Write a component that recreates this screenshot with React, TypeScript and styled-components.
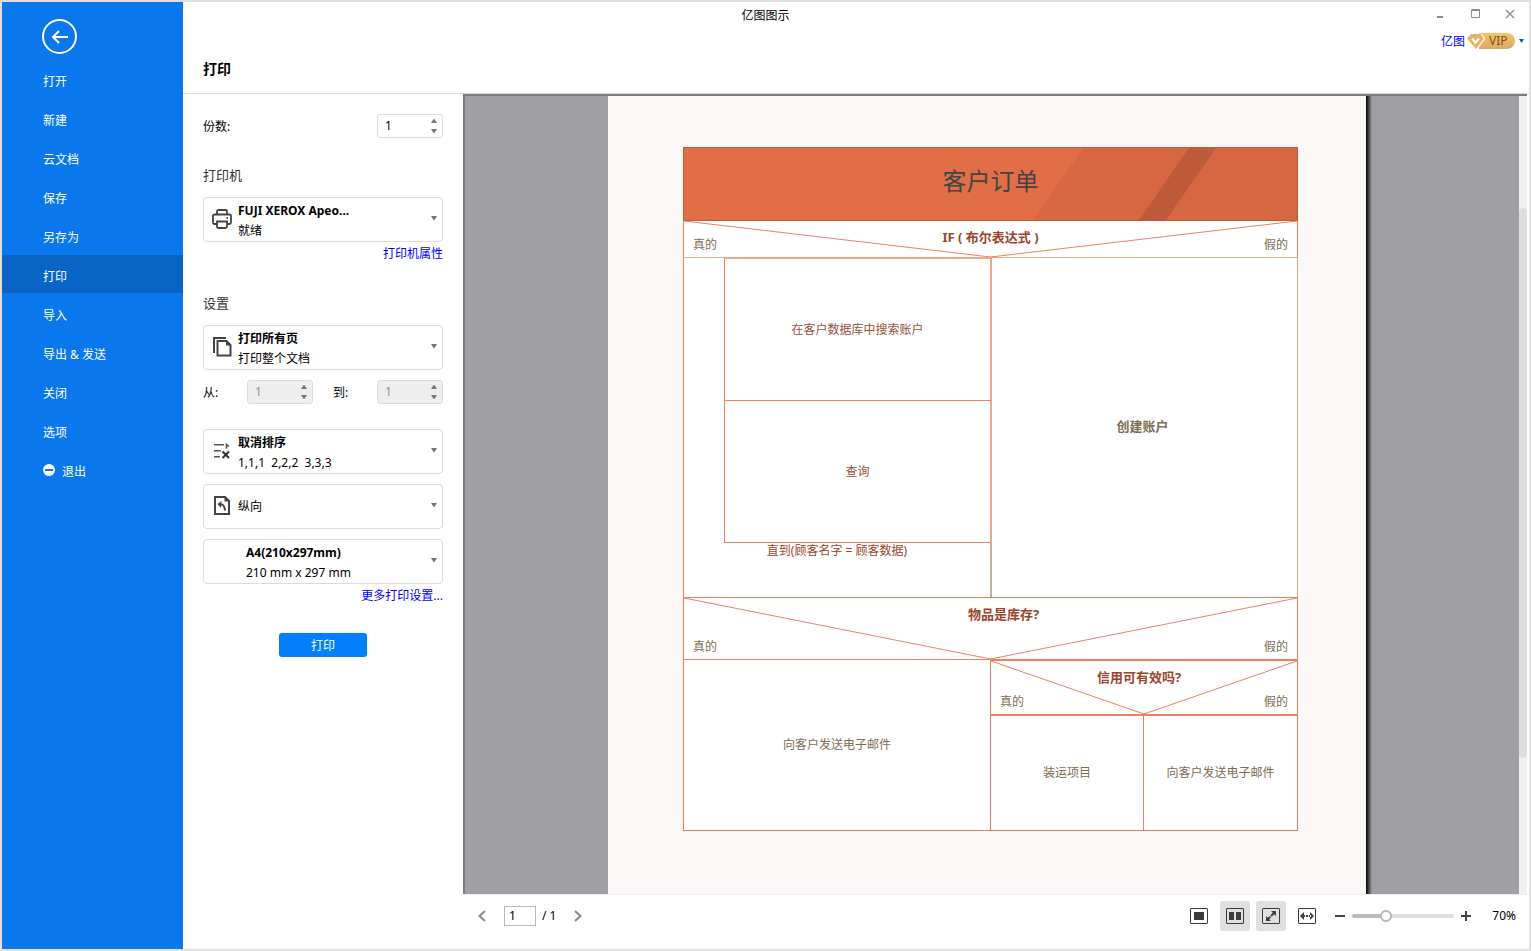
import React, { useState } from "react";
import styled, { createGlobalStyle, css } from "styled-components";

const GlobalStyle = createGlobalStyle`
  *, *::before, *::after { box-sizing: border-box; }
  body { margin: 0; }
  body, button, input, select {
    font-family: "Noto Sans", "Noto Sans CJK SC", sans-serif;
    font-size: 12px;
    line-height: 20px;
    color: #000;
  }
  button { border: 0; padding: 0; background: none; cursor: pointer; }
  a { color: #0000ff; text-decoration: none; }
`;

const LINE = "#ee7f5e";
const SOFT_LINE = "#f2a489";
const TAN_LINE = "#c8ae94";

/* ---------- window frame ---------- */

const Window = styled.div`
  display: grid;
  grid-template-columns: 181px minmax(0, 1fr);
  grid-template-rows: 26px 66px minmax(0, 1fr);
  height: 100vh;
  border: 2px solid #e0e0e0;
  background: #fff;
`;

const WindowTitle = styled.div`
  grid-column: 1 / -1;
  grid-row: 1;
  z-index: 1;
  padding-top: 4px;
  text-align: center;
  pointer-events: none;
`;

const WindowControls = styled.div`
  grid-column: 2;
  grid-row: 1;
  justify-self: end;
  z-index: 2;
  display: flex;
  gap: 11px;
  padding-right: 7px;
`;

const WindowButton = styled.button`
  display: grid;
  place-items: center;
  width: 24px;
  height: 24px;
`;

/* ---------- sidebar ---------- */

const Sidebar = styled.nav`
  grid-column: 1;
  grid-row: 1 / -1;
  padding-top: 17px;
  background: #0a77ed;
`;

const BackButton = styled.button`
  display: block;
  width: 35px;
  height: 35px;
  margin: 0 0 6px 40px;
`;

const Menu = styled.ul`
  display: grid;
  gap: 1px;
  margin: 0;
  padding: 0;
  list-style: none;
`;

const MenuLink = styled.a<{ $active?: boolean }>`
  display: flex;
  align-items: center;
  gap: 7px;
  height: 38px;
  padding: 6px 0 0 41px;
  color: #fff;
  background: ${(p) => (p.$active ? "#0865c6" : "transparent")};
`;

const ExitIcon = styled.svg`
  margin-bottom: 4px;
`;

/* ---------- page header ---------- */

const PageHeader = styled.header`
  grid-column: 2;
  grid-row: 2;
  display: flex;
  justify-content: space-between;
  align-items: flex-start;
  padding: 3px 5px 0 20px;
  border-bottom: 1px solid #dcdcdc;
`;

const PageTitle = styled.h1`
  margin: 28px 0 0;
  font-size: 14px;
  line-height: 20px;
`;

const Account = styled.div`
  display: flex;
  align-items: center;
  gap: 2px;
  height: 20px;
`;

const AccountLink = styled.a`
  padding-top: 2px;
`;

const VipBadge = styled.span`
  display: flex;
  align-items: center;
  width: 48px;
  height: 16px;
  border-radius: 0 8px 8px 0;
  background: linear-gradient(#f3c765, #dba762) 12px 0 / 36px 16px no-repeat;
  color: #7c5220;
  line-height: 16px;
`;

const AccountMenu = styled.button`
  display: grid;
  width: 5px;
  margin-left: 2px;
`;

/* ---------- settings panel ---------- */

const Content = styled.div`
  grid-column: 2;
  grid-row: 3;
  display: grid;
  grid-template-columns: 280px minmax(0, 1fr);
`;

const Settings = styled.form`
  display: flex;
  flex-direction: column;
  padding: 20px;
`;

const FieldRow = styled.div`
  display: flex;
  align-items: center;
  justify-content: space-between;
  height: 24px;
`;

const RangeRow = styled.div`
  display: grid;
  grid-template-columns: 44px 86px 44px 66px;
  align-items: center;
  height: 24px;
  margin: 10px 0 25px;
`;

const FieldLabel = styled.label`
  padding-top: 2px;
`;

const SectionTitle = styled.h2`
  margin: 27px 0 12px;
  font-size: 13px;
  font-weight: 400;
  line-height: 20px;
  color: #333;
`;

const StepperBox = styled.div<{ $disabled?: boolean }>`
  display: flex;
  width: 66px;
  height: 24px;
  border: 1px solid ${(p) => (p.$disabled ? "#dedede" : "#dcdcdc")};
  border-radius: 3px;
  background: ${(p) => (p.$disabled ? "#eeeeee" : "#fff")};
`;

const StepperInput = styled.input`
  width: 48px;
  padding: 0 0 0 7px;
  border: 0;
  background: transparent;
  appearance: textfield;
  outline: 0;
  &::-webkit-inner-spin-button { appearance: none; margin: 0; }
  &:disabled { color: #9a938c; }
`;

const StepperButtons = styled.div`
  display: grid;
  grid-template-rows: 10px 10px;
  align-content: center;
  width: 16px;
`;

const StepButton = styled.button`
  display: grid;
  place-items: center;
`;

const Card = styled.div`
  display: grid;
  grid-template-columns: 34px minmax(0, 1fr) 18px;
  align-items: center;
  height: 45px;
  flex: none;
  border: 1px solid #dcdcdc;
  border-radius: 4px;
  & + & { margin-top: 10px; }
`;

const CardIcon = styled.span`
  grid-area: 1 / 1;
  display: grid;
  padding-left: 8px;
  padding-bottom: 2px;
`;

const CardSelect = styled.select<{ $single?: boolean; $indent?: boolean }>`
  grid-area: 1 / 1 / 2 / 4;
  width: 100%;
  height: 43px;
  margin: 0;
  padding: ${(p) => (p.$single ? "0" : "0 0 18px")};
  padding-left: ${(p) => (p.$indent ? "42px" : "34px")};
  border: 0;
  border-radius: 4px;
  background: transparent;
  appearance: none;
  font-weight: ${(p) => (p.$single ? 400 : 700)};
`;

const CardDetail = styled.span<{ $indent?: boolean }>`
  grid-area: 1 / 2;
  align-self: end;
  padding-left: ${(p) => (p.$indent ? "8px" : "0")};
  white-space: pre;
  pointer-events: none;
`;

const CardCaret = styled.span`
  grid-area: 1 / 3;
  display: grid;
  padding-left: 7px;
  padding-bottom: 3px;
  pointer-events: none;
`;

const PanelLink = styled.a`
  align-self: flex-end;
  margin: 2px 0;
`;

const PrintButton = styled.button`
  align-self: center;
  width: 88px;
  height: 24px;
  margin-top: 25px;
  padding-top: 2px;
  border-radius: 3px;
  background: #0080ff;
  color: #fff;
`;

/* ---------- preview ---------- */

const Preview = styled.main`
  display: grid;
  grid-template-rows: minmax(0, 1fr) auto;
`;

const Stage = styled.div`
  display: grid;
  grid-template-columns: minmax(0, 1fr) 8px;
  grid-template-rows: minmax(0, 1fr);
  margin-right: 2px;
  border: solid #7c7c7c;
  border-width: 2px 0 0 2px;
  overflow: hidden;
`;

const Viewport = styled.div`
  display: flex;
  justify-content: center;
  padding-right: 4px;
  background: #a09fa4;
  overflow: hidden;
`;

const ScrollTrack = styled.div`
  display: grid;
  grid-template-rows: 14fr 69fr 17fr;
  background: #f0f0f0;
`;

const ScrollThumb = styled.div`
  grid-row: 2;
  border-radius: 4px;
  background: #dedede;
`;

const Paper = styled.article`
  flex: none;
  width: 758px;
  padding: 51px 68px 0 75px;
  background: #fcf8f7;
`;

const PaperEdge = styled.div`
  flex: none;
  width: 6px;
  background: linear-gradient(90deg, #000, #2c2c2c 30%, #a09fa4);
`;

/* ---------- chart on the paper ---------- */

const Chart = styled.div`
  background: #fff;
  color: #7c6d54;
  line-height: 16px;
`;

const ChartTitle = styled.h2`
  display: grid;
  height: 74px;
  margin: 0;
  border: 1px solid #bd5b3b;
  background: #e26e47;
  color: #444;
  font-size: 24px;
  font-weight: 400;
  line-height: 66px;
  text-align: center;
  > * { grid-area: 1 / 1; }
`;

const TitleText = styled.span`
  z-index: 1;
`;

const Stripes = styled.svg`
  display: block;
  width: 100%;
  height: 72px;
`;

const ConditionBox = styled.div<{ $height: number; $joined?: boolean }>`
  display: grid;
  grid-template-rows: minmax(0, 1fr);
  height: ${(p) => p.$height}px;
  border: 1px solid ${LINE};
  border-top-width: ${(p) => (p.$joined ? 0 : 1)}px;
  border-bottom-color: ${(p) => (p.$joined ? "#dfae96" : LINE)};
  > * { grid-area: 1 / 1; }
`;

const Diagonals = styled.svg`
  display: block;
  width: 100%;
  height: 100%;
  overflow: visible;
`;

const Question = styled.strong<{ $left?: number; $right?: number }>`
  padding: 8px ${(p) => p.$right ?? 0}px 0 ${(p) => p.$left ?? 0}px;
  color: #98452b;
  font-size: 13px;
  text-align: center;
  white-space: pre;
`;

const Answers = styled.div`
  display: flex;
  justify-content: space-between;
  align-self: end;
  padding: 0 9px 4px 9px;
`;

const SplitRow = styled.div<{ $left: number; $height: number }>`
  display: grid;
  grid-template-columns: ${(p) => p.$left}px minmax(0, 1fr);
  height: ${(p) => p.$height}px;
`;

const centered = css`
  display: grid;
  place-items: center;
`;

const LoopColumn = styled.div`
  display: grid;
  grid-template-columns: 40px minmax(0, 1fr);
  grid-template-rows: 143px 142px minmax(0, 1fr);
  border-left: 1px solid ${LINE};
`;

const LoopCell = styled.div`
  ${centered}
  grid-column: 2;
  border-left: 1px solid ${LINE};
  border-right: 2px solid ${SOFT_LINE};
  border-bottom: 1px solid ${LINE};
  color: #96513b;
  &:first-child { border-top: 1px solid ${SOFT_LINE}; }
`;

const LoopCondition = styled.div`
  grid-column: 1 / -1;
  border-right: 2px solid ${TAN_LINE};
  color: #98452b;
  text-align: center;
`;

const CreateCell = styled.div`
  ${centered}
  padding: 0 4px 4px 0;
  border-right: 1px solid ${TAN_LINE};
  font-size: 13px;
  font-weight: 700;
`;

const MailCell = styled.div`
  ${centered}
  border-left: 1px solid ${LINE};
  border-bottom: 1px solid ${LINE};
`;

const CreditColumn = styled.div`
  display: grid;
  grid-template-rows: auto minmax(0, 1fr);
`;

const CreditCells = styled.div`
  display: grid;
  grid-template-columns: 153px minmax(0, 1fr);
  border-top: 1px solid ${LINE};
  border-left: 1px solid ${LINE};
`;

const CreditCell = styled.div`
  ${centered}
  border-right: 1px solid ${LINE};
  border-bottom: 1px solid ${LINE};
`;

/* ---------- footer ---------- */

const Footer = styled.footer`
  display: flex;
  justify-content: space-between;
  height: 55px;
  padding: 6px 13px 0 13px;
  border-top: 1px solid #f0eeee;
`;

const FooterGroup = styled.div<{ $gap: number }>`
  display: flex;
  align-items: center;
  gap: ${(p) => p.$gap}px;
  height: 30px;
`;

const PageInput = styled.input`
  width: 32px;
  height: 20px;
  padding: 0 4px;
  border: 1px solid #b8b8b8;
`;

const IconButton = styled.button<{ $pressed?: boolean; $small?: boolean }>`
  display: grid;
  place-items: center;
  width: ${(p) => (p.$small ? 12 : 30)}px;
  height: 30px;
  border-radius: 3px;
  background: ${(p) => (p.$pressed ? "#e0e0e0" : "transparent")};
`;

const ZoomSlider = styled.input`
  width: 102px;
  height: 14px;
  margin: 0;
  appearance: none;
  background: transparent;
  &::-webkit-slider-runnable-track {
    height: 4px;
    border-radius: 2px;
    background: linear-gradient(90deg, #bababa var(--fill), #e0e0e0 var(--fill));
  }
  &::-webkit-slider-thumb {
    appearance: none;
    width: 12px;
    height: 12px;
    margin-top: -4px;
    border: 2px solid #b8b8b8;
    border-radius: 50%;
    background: #fff;
  }
`;

const ZoomValue = styled.output`
  width: 38px;
  text-align: right;
`;

/* ---------- icons ---------- */

const Triangle = ({ up, color = "#757575", w = 6 }: { up?: boolean; color?: string; w?: number }) => (
  <svg width={w} height={w / 2 + 1} viewBox="0 0 6 4" fill={color} preserveAspectRatio="none">
    <path d={up ? "M0 4L2.6 0h.8L6 4z" : "M0 0L2.6 4h.8L6 0z"} />
  </svg>
);

const PrinterIcon = () => (
  <svg width="20" height="20" viewBox="0 0 20 20" fill="none" stroke="#444" strokeWidth="1.8">
    <path d="M5 5.500V2.500Q5 1 6.500 1h7Q15 1 15 2.500v3" />
    <path d="M5 15H2.500Q1 15 1 13.500V7q0-1.500 1.500-1.500h15Q19 5.500 19 7v6.500q0 1.500-1.500 1.500H15" />
    <path d="M5 12.500h10v5q0 1.500-1.500 1.500h-7Q5 19 5 17.500z" />
    <path d="M14.500 9h1.500" />
  </svg>
);

const PagesIcon = () => (
  <svg width="20" height="21" viewBox="0 0 20 21" fill="none" stroke="#444" strokeWidth="2">
    <path d="M2 17V2h12" />
    <path d="M5.500 5h9l4 4v10.500h-13z" />
    <path d="M14 5v4.500h4.500z" fill="#444" stroke="none" />
  </svg>
);

const SortIcon = () => (
  <svg width="20" height="18" viewBox="0 0 20 18" fill="none" stroke="#555" strokeWidth="1.6">
    <path d="M2 2.800h10M2 8.800h7M2 14.800h6" />
    <path d="M14.500 6.500V1.500M14.500 2.500l2.500 2" />
    <path d="M10.500 9.500l6.500 6.500M17 9.500L10.500 16" stroke="#333" strokeWidth="2" />
  </svg>
);

const OrientationIcon = () => (
  <svg width="20" height="20" viewBox="0 0 20 20" fill="none" stroke="#444" strokeWidth="2">
    <path d="M3 1h10l4 4v13H3z" />
    <path d="M12.500 1v4.500H17z" fill="#444" stroke="none" />
    <path d="M7 8q5.500-.5 6 6.500" />
    <path d="M9.500 5L5.500 8l3.500 4z" fill="#444" stroke="none" />
  </svg>
);

const FrameIcon = ({ children }: { children: React.ReactNode }) => (
  <svg width="18" height="16" viewBox="0 0 18 16" fill="#3c3c3c">
    <rect x=".5" y=".5" width="17" height="15" rx=".5" fill="none" stroke="#3c3c3c" />
    {children}
  </svg>
);

const ChevronIcon = ({ right }: { right?: boolean }) => (
  <svg width="8" height="12" viewBox="0 0 8 12" fill="none" stroke="#888" strokeWidth="2">
    <path d={right ? "M1 1l5.500 5L1 11" : "M7 1L1.500 6 7 11"} />
  </svg>
);

/* ---------- parts ---------- */

const Stepper = ({ id, disabled }: { id: string; disabled?: boolean }) => {
  const [value, setValue] = useState(1);
  return (
    <StepperBox $disabled={disabled}>
      <StepperInput
        id={id}
        type="number"
        min={1}
        value={value}
        disabled={disabled}
        onChange={(e) => setValue(Number(e.target.value))}
      />
      <StepperButtons>
        <StepButton type="button" aria-label="增加" disabled={disabled} onClick={() => setValue(value + 1)}>
          <Triangle up />
        </StepButton>
        <StepButton
          type="button"
          aria-label="减少"
          disabled={disabled}
          onClick={() => setValue(Math.max(1, value - 1))}
        >
          <Triangle />
        </StepButton>
      </StepperButtons>
    </StepperBox>
  );
};

type ChoiceProps = { label: string; value: string; detail?: string; icon?: React.ReactNode };

const Choice = ({ label, value, detail, icon }: ChoiceProps) => (
  <Card>
    {icon && <CardIcon>{icon}</CardIcon>}
    <CardSelect aria-label={label} $single={!detail} $indent={!icon}>
      <option>{value}</option>
    </CardSelect>
    {detail && <CardDetail $indent={!icon}>{detail}</CardDetail>}
    <CardCaret>
      <Triangle />
    </CardCaret>
  </Card>
);

type ConditionProps = { text: string; height: number; joined?: boolean; left?: number; right?: number };

const Condition = ({ text, height, joined, left, right }: ConditionProps) => (
  <ConditionBox $height={height} $joined={joined}>
    <Diagonals viewBox="0 0 100 100" preserveAspectRatio="none" fill="none" stroke={LINE}>
      <path d="M0 0L50 100L100 0" vectorEffect="non-scaling-stroke" />
    </Diagonals>
    <Question $left={left} $right={right}>
      {text}
    </Question>
    <Answers>
      <span>真的</span>
      <span>假的</span>
    </Answers>
  </ConditionBox>
);

const MENU = ["打开", "新建", "云文档", "保存", "另存为", "打印", "导入", "导出 & 发送", "关闭", "选项"];

export default function App() {
  const [zoom, setZoom] = useState(70);
  const fill = { "--fill": `${((zoom - 10) / 190) * 100}%` } as React.CSSProperties;

  return (
    <>
      <GlobalStyle />
      <Window>
        <WindowTitle>亿图图示</WindowTitle>
        <WindowControls>
          <WindowButton aria-label="最小化">
            <svg width="12" height="12" fill="#8c8c8c">
              <rect x="3" y="8" width="6" height="2" />
            </svg>
          </WindowButton>
          <WindowButton aria-label="最大化">
            <svg width="12" height="12" fill="none" stroke="#8c8c8c">
              <path d="M2.500 1.500h8v8h-8zM2.500 2.500h8" />
            </svg>
          </WindowButton>
          <WindowButton aria-label="关闭窗口">
            <svg width="12" height="12" fill="none" stroke="#8c8c8c" strokeWidth="1.400">
              <path d="M2 2l8 8M10 2l-8 8" />
            </svg>
          </WindowButton>
        </WindowControls>

        <Sidebar>
          <BackButton aria-label="返回">
            <svg width="35" height="35" viewBox="0 0 35 35" fill="none" stroke="#fff" strokeWidth="2">
              <circle cx="17.500" cy="17.500" r="16.500" />
              <path d="M26 18H11M17 12l-6 6 6 6" />
            </svg>
          </BackButton>
          <Menu>
            {MENU.map((item) => (
              <li key={item}>
                <MenuLink href="#" $active={item === "打印"}>
                  {item}
                </MenuLink>
              </li>
            ))}
            <li>
              <MenuLink href="#">
                <ExitIcon width="12" height="12" viewBox="0 0 12 12">
                  <circle cx="6" cy="6" r="6" fill="#fff" />
                  <rect x="2" y="5" width="8" height="2" fill="#0a77ed" />
                </ExitIcon>
                退出
              </MenuLink>
            </li>
          </Menu>
        </Sidebar>

        <PageHeader>
          <PageTitle>打印</PageTitle>
          <Account>
            <AccountLink href="#">亿图</AccountLink>
            <VipBadge>
              <svg width="22" height="16" viewBox="0 0 22 16">
                <path d="M4 1h10l3.500 4.500L9 16 0 5.500z" fill="#e5b366" />
                <path d="M14 .5l3.500 5L10 16" fill="none" stroke="#fff" strokeWidth="1.200" />
                <path d="M5 5.500l3.500 4 3.500-4" fill="none" stroke="#fff" strokeWidth="2.200" />
              </svg>
              VIP
            </VipBadge>
            <AccountMenu aria-label="账户菜单">
              <Triangle color="#0b55b0" w={5} />
            </AccountMenu>
          </Account>
        </PageHeader>

        <Content>
          <Settings onSubmit={(e) => e.preventDefault()}>
            <FieldRow>
              <FieldLabel htmlFor="copies">份数:</FieldLabel>
              <Stepper id="copies" />
            </FieldRow>
            <SectionTitle>打印机</SectionTitle>
            <Choice label="打印机" value="FUJI XEROX Apeo..." detail="就绪" icon={<PrinterIcon />} />
            <PanelLink href="#">打印机属性</PanelLink>
            <SectionTitle>设置</SectionTitle>
            <Choice label="打印范围" value="打印所有页" detail="打印整个文档" icon={<PagesIcon />} />
            <RangeRow>
              <FieldLabel htmlFor="from">从:</FieldLabel>
              <Stepper id="from" disabled />
              <FieldLabel htmlFor="to">到:</FieldLabel>
              <Stepper id="to" disabled />
            </RangeRow>
            <Choice label="排序" value="取消排序" detail="1,1,1  2,2,2  3,3,3" icon={<SortIcon />} />
            <Choice label="方向" value="纵向" icon={<OrientationIcon />} />
            <Choice label="纸张大小" value="A4(210x297mm)" detail="210 mm x 297 mm" />
            <PanelLink href="#">更多打印设置...</PanelLink>
            <PrintButton type="submit">打印</PrintButton>
          </Settings>

          <Preview>
            <Stage>
              <Viewport>
                <Paper>
                  <Chart>
                    <ChartTitle>
                      <Stripes viewBox="0 0 613 72" preserveAspectRatio="none">
                        <path d="M399 0H613V72H349z" fill="#d76742" />
                        <path d="M505 0h27L482 72h-27z" fill="#bd5a39" />
                      </Stripes>
                      <TitleText>客户订单</TitleText>
                    </ChartTitle>
                    <Condition text="IF ( 布尔表达式 )" height={37} joined />
                    <SplitRow $left={309} $height={339}>
                      <LoopColumn>
                        <LoopCell>在客户数据库中搜索账户</LoopCell>
                        <LoopCell>查询</LoopCell>
                        <LoopCondition>直到(顾客名字 = 顾客数据)</LoopCondition>
                      </LoopColumn>
                      <CreateCell>创建账户</CreateCell>
                    </SplitRow>
                    <Condition text="物品是库存?" height={63} left={26} />
                    <SplitRow $left={307} $height={171}>
                      <MailCell>向客户发送电子邮件</MailCell>
                      <CreditColumn>
                        <Condition text="信用可有效吗?" height={55} right={10} />
                        <CreditCells>
                          <CreditCell>装运项目</CreditCell>
                          <CreditCell>向客户发送电子邮件</CreditCell>
                        </CreditCells>
                      </CreditColumn>
                    </SplitRow>
                  </Chart>
                </Paper>
                <PaperEdge />
              </Viewport>
              <ScrollTrack>
                <ScrollThumb />
              </ScrollTrack>
            </Stage>

            <Footer>
              <FooterGroup $gap={16}>
                <IconButton $small aria-label="上一页">
                  <ChevronIcon />
                </IconButton>
                <FooterGroup $gap={6}>
                  <PageInput aria-label="页码" defaultValue="1" />
                  <span>/ 1</span>
                </FooterGroup>
                <IconButton $small aria-label="下一页">
                  <ChevronIcon right />
                </IconButton>
              </FooterGroup>
              <FooterGroup $gap={12}>
                <FooterGroup $gap={6}>
                  <IconButton aria-label="单页">
                    <FrameIcon>
                      <rect x="4" y="4" width="10" height="8" />
                    </FrameIcon>
                  </IconButton>
                  <IconButton $pressed aria-label="双页">
                    <FrameIcon>
                      <rect x="3" y="4" width="5" height="8" />
                      <rect x="10" y="4" width="5" height="8" />
                    </FrameIcon>
                  </IconButton>
                  <IconButton $pressed aria-label="整页">
                    <FrameIcon>
                      <path d="M9 3h5v5zM4 8v5h5z" />
                      <path d="M5.500 11.500l7-7" stroke="#3c3c3c" strokeWidth="2" strokeDasharray="4 1" />
                    </FrameIcon>
                  </IconButton>
                  <IconButton aria-label="页宽">
                    <FrameIcon>
                      <path d="M2 8l4-4v8zM16 8l-4-4v8zM5 7h2v2H5zM8 7h2v2H8zM11 7h2v2h-2z" />
                    </FrameIcon>
                  </IconButton>
                </FooterGroup>
                <FooterGroup $gap={6}>
                  <IconButton $small aria-label="缩小" onClick={() => setZoom(Math.max(10, zoom - 10))}>
                    <svg width="10" height="10" fill="#444">
                      <rect y="4" width="10" height="2" />
                    </svg>
                  </IconButton>
                  <ZoomSlider
                    type="range"
                    aria-label="缩放"
                    min={10}
                    max={200}
                    value={zoom}
                    style={fill}
                    onChange={(e) => setZoom(Number(e.target.value))}
                  />
                  <IconButton $small aria-label="放大" onClick={() => setZoom(Math.min(200, zoom + 10))}>
                    <svg width="10" height="10" fill="#444">
                      <path d="M4 0h2v4h4v2H6v4H4V6H0V4h4z" />
                    </svg>
                  </IconButton>
                  <ZoomValue>{zoom}%</ZoomValue>
                </FooterGroup>
              </FooterGroup>
            </Footer>
          </Preview>
        </Content>
      </Window>
    </>
  );
}
